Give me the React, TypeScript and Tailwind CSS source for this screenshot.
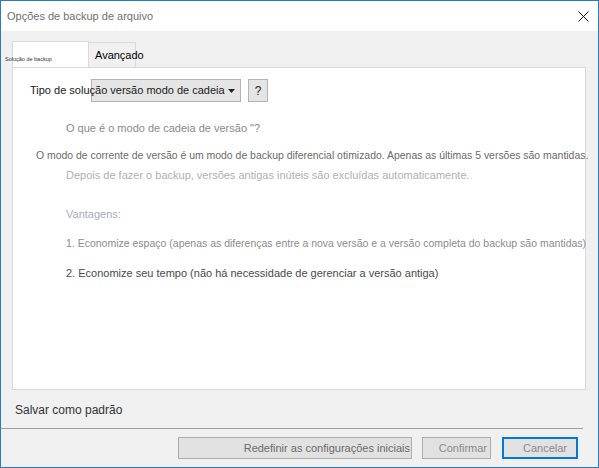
export default function App() {
  return (
    <div className="w-[599px] h-[468px] border border-[#2b7bc4] bg-[#f0f0f0] flex flex-col overflow-hidden font-['Liberation_Sans',Arial,sans-serif]">
      {/* title bar */}
      <div className="h-[30px] shrink-0 bg-white flex items-center justify-between pl-[6px] pr-[9px]">
        <span className="text-[11px] text-[#6f6f6f]">Opções de backup de arquivo</span>
        <svg width="11" height="11" viewBox="0 0 11 11" className="block">
          <path d="M0.5 0.5 L10.5 10.5 M10.5 0.5 L0.5 10.5" stroke="#111" strokeWidth="1" fill="none" />
        </svg>
      </div>

      {/* tabs */}
      <div className="relative mt-[10px] h-[26px] shrink-0 flex pl-[11px]">
        <div className="w-[77px] shrink-0 bg-white border border-b-0 border-[#d9d9d9]" />
        <div className="relative mt-[1px] w-[47px] min-w-0 shrink-0 border border-b-0 border-l-0 border-[#d9d9d9]">
          <span className="absolute left-[6px] top-0 h-full flex items-center text-[11px] text-black whitespace-nowrap">
            Avançado
          </span>
        </div>
        <span className="absolute left-[4px] top-[14px] h-[8px] leading-[8px] text-[5.5px] text-[#333] whitespace-nowrap">
          Solução de backup
        </span>
      </div>

      {/* panel */}
      <div className="ml-[11px] w-[574px] h-[323px] shrink-0 bg-white border border-[#d9d9d9] flex flex-col">
        <div className="relative mt-[11px] h-[23px] flex pl-[78px]">
          <div className="w-[150px] h-[23px] bg-[#e5e5e5] border border-[#b3b3b3]" />
          <div className="ml-[7px] w-[20px] h-[23px] bg-[#e5e5e5] border border-[#b3b3b3] flex items-center justify-center text-[12px] text-[#222]">
            ?
          </div>
          <div className="absolute left-[17px] top-0 h-[23px] flex items-center text-[11px] text-[#1a1a1a] whitespace-nowrap">
            <span>Tipo de solução versão modo de cadeia</span>
            <svg width="7" height="4" viewBox="0 0 7 4" className="ml-[3px] block">
              <path d="M0 0 L7 0 L3.5 4 Z" fill="#222" />
            </svg>
          </div>
        </div>
        <div className="mt-[18px] h-[16px] leading-[16px] pl-[53px] text-[11px] text-[#8a8a8a] whitespace-nowrap">
          O que é o modo de cadeia de versão "?
        </div>
        <div className="mt-[12px] h-[16px] leading-[16px] pl-[23px] text-[10.45px] text-[#6a6a6a] whitespace-nowrap">
          O modo de corrente de versão é um modo de backup diferencial otimizado. Apenas as últimas 5 versões são mantidas.
        </div>
        <div className="mt-[3px] h-[16px] leading-[16px] pl-[53px] text-[11px] text-[#b0b0b0] whitespace-nowrap">
          Depois de fazer o backup, versões antigas inúteis são excluídas automaticamente.
        </div>
        <div className="mt-[23px] h-[16px] leading-[16px] pl-[53px] text-[11px] text-[#a9a9c2] whitespace-nowrap">
          Vantagens:
        </div>
        <div className="mt-[13px] h-[16px] leading-[16px] pl-[53px] text-[10.5px] text-[#8c8c8c] whitespace-nowrap">
          1. Economize espaço (apenas as diferenças entre a nova versão e a versão completa do backup são mantidas)
        </div>
        <div className="mt-[14px] h-[16px] leading-[16px] pl-[53px] text-[11px] text-[#4a4a4a] whitespace-nowrap">
          2. Economize seu tempo (não há necessidade de gerenciar a versão antiga)
        </div>
      </div>

      {/* save as default */}
      <div className="h-[38px] shrink-0 flex items-center pl-[14px] pt-[1px] text-[12px] text-[#333]">
        Salvar como padrão
      </div>
      <div className="h-px w-[582px] shrink-0 bg-[#a0a0a0]" />

      {/* buttons */}
      <div className="mt-[8px] h-[22px] shrink-0 flex pl-[177px]">
        <div className="w-[234px] h-[22px] bg-[#e1e1e1] border border-[#adadad] flex items-center justify-end pr-[1px] text-[11px] text-[#6a6a6a] whitespace-nowrap">
          Redefinir as configurações iniciais
        </div>
        <div className="ml-[10px] w-[69px] h-[22px] bg-[#e1e1e1] border border-[#adadad] flex items-center justify-end pr-[3px] text-[11px] text-[#8a8a8a]">
          Confirmar
        </div>
        <div className="ml-[11px] w-[76px] h-[22px] bg-[#e1e1e1] border-2 border-[#0078d7] flex items-center justify-end pr-[9px] text-[11px] text-[#8a8a8a]">
          Cancelar
        </div>
      </div>
    </div>
  );
}
